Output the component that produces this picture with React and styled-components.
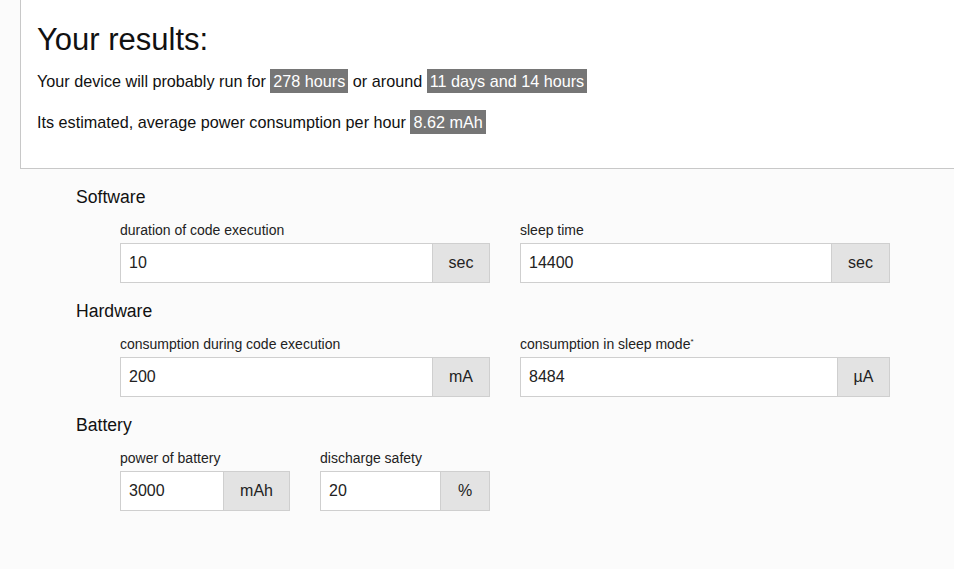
import React from 'react';
import styled, {createGlobalStyle} from 'styled-components';

const GlobalStyle = createGlobalStyle`
  html, body {
    margin: 0;
    padding: 0;
    background: #fbfbfb;
    font-family: "Liberation Sans", Arial, Helvetica, sans-serif;
    color: #111;
  }
`;

//-----< Results -----\\
const ResultBox = styled.section`
  margin-left: 20px;
  background: #fff;
  border-left: 1px solid #c8c8c8;
  border-bottom: 1px solid #c8c8c8;
  padding: 23px 16px 34px 16px;
`;

const Title = styled.h1`
  margin: 0;
  font-size: 31px;
  line-height: 34px;
  font-weight: 400;
`;

const Line = styled.p`
  margin: ${p => p.$first ? '12px' : '17px'} 0 0 0;
  font-size: 16.2px;
  line-height: 24px;
`;

const Value = styled.span`
  display: inline-block;
  background: #767676;
  color: #fff;
  padding: 0 3px;
  line-height: 24px;
`;

//-----< Form -----\\
const Form = styled.div`
  padding: 16px 0 0 76px;
`;

const Section = styled.div`
  padding-bottom: 16px;
`;

const Heading = styled.h2`
  margin: 0 0 12px 0;
  font-size: 17.6px;
  line-height: 24px;
  font-weight: 400;
  color: #111;
`;

const Row = styled.div`
  display: grid;
  grid-template-columns: ${p => p.$narrow ? '170px 170px' : '370px 370px'};
  column-gap: 30px;
  margin-left: 44px;
`;

const Label = styled.label`
  display: block;
  font-size: 14px;
  line-height: 18px;
  margin-bottom: 4px;
  color: #222;

  sup {
    font-size: 8px;
    line-height: 0;
    vertical-align: 5px;
  }
`;

const Group = styled.div`
  display: flex;
  height: 40px;
`;

const Input = styled.input`
  flex: 1;
  min-width: 0;
  box-sizing: border-box;
  height: 40px;
  border: 1px solid #cfcfcf;
  border-right: none;
  background: #fff;
  padding: 0 8px;
  font-family: inherit;
  font-size: 16px;
  color: #222;
  outline: none;
`;

const Addon = styled.span`
  box-sizing: border-box;
  width: ${p => p.$w}px;
  height: 40px;
  border: 1px solid #cfcfcf;
  background: #e3e3e3;
  display: flex;
  align-items: center;
  justify-content: center;
  font-size: 16px;
  color: #222;
`;

const sections = [
  {
    title: 'Software',
    fields: [
      {label: 'duration of code execution', value: '10', unit: 'sec', w: 58},
      {label: 'sleep time', value: '14400', unit: 'sec', w: 59},
    ],
  },
  {
    title: 'Hardware',
    fields: [
      {label: 'consumption during code execution', value: '200', unit: 'mA', w: 58},
      {label: 'consumption in sleep mode', star: true, value: '8484', unit: 'µA', w: 53},
    ],
  },
  {
    title: 'Battery',
    narrow: true,
    fields: [
      {label: 'power of battery', value: '3000', unit: 'mAh', w: 67},
      {label: 'discharge safety', value: '20', unit: '%', w: 50},
    ],
  },
];

function Field({field}) {
  return (
    <div>
      <Label>{field.label}{field.star && <sup>*</sup>}</Label>
      <Group>
        <Input defaultValue={field.value}/>
        <Addon $w={field.w}>{field.unit}</Addon>
      </Group>
    </div>
  )
}

export default function App() {
  return (
    <>
      <GlobalStyle/>
      <ResultBox>
        <Title>Your results:</Title>
        <Line $first>
          Your device will probably run for <Value>278 hours</Value> or around <Value>11 days and 14 hours</Value>
        </Line>
        <Line>
          Its estimated, average power consumption per hour <Value>8.62 mAh</Value>
        </Line>
      </ResultBox>
      <Form>
        {sections.map((s, i) => (
          <Section key={i}>
            <Heading>{s.title}</Heading>
            <Row $narrow={s.narrow}>
              {s.fields.map((f, j) => <Field key={j} field={f}/>)}
            </Row>
          </Section>
        ))}
      </Form>
    </>
  )
}
